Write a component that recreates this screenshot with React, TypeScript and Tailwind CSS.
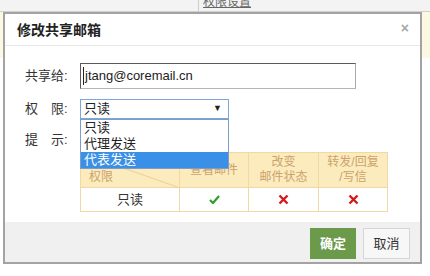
import React from "react";

const font = "font-['Liberation_Sans','Noto_Sans_CJK_SC',sans-serif]";

function Check() {
  return (
    <svg width="11" height="9" viewBox="0 0 11 9">
      <path d="M1 5 L4 8 L10 1" fill="none" stroke="#2e9e2e" strokeWidth="2.2" />
    </svg>
  );
}

function Cross() {
  return (
    <svg width="11" height="11" viewBox="0 0 11 11">
      <path d="M1.5 1.5 L9.5 9.5 M9.5 1.5 L1.5 9.5" fill="none" stroke="#d11a1a" strokeWidth="2.4" />
    </svg>
  );
}

export default function App() {
  return (
    <div className={`relative w-[430px] h-[276px] overflow-hidden bg-white ${font}`}>
      {/* background page */}
      <div className="h-[12px] bg-[#f3f3f3] border-b border-[#cfcfcf] flex">
        <div className="w-[199px] border-r border-[#cfcfcf]" />
        <div className="pl-[4px] text-[12px] leading-[12px] text-[#666] mt-[-4px] underline">权限设置</div>
      </div>
      <div className="h-[46px] bg-[#fdf8e1]" />

      {/* dialog */}
      <div className="absolute left-[3px] top-[12px] w-[419px] h-[252px] border-2 border-[#a3a3a3] bg-white flex flex-col">
        <div className="h-[32px] shrink-0 border-b border-[#e8e8e8] flex items-center justify-between pl-[12px] pr-[11px]">
          <span className="text-[14px] font-bold text-[#222] leading-none pt-[1px]">修改共享邮箱</span>
          <span className="text-[14px] font-bold text-[#a8a8a8] leading-none mt-[-4px]">×</span>
        </div>

        <div className="flex-1 pl-[20px] pt-[17px] text-[13px] text-[#333]">
          <div className="flex items-center h-[26px]">
            <span className="w-[55px]">共享给:</span>
            <div className="relative w-[276px] h-[26px] border border-t-[#5a5a5a] border-l-[#5a5a5a] border-r-[#a8a8a8] border-b-[#b5b5b5] flex items-center pl-[2px] text-[13px] text-[#222]">
              <span className="w-[1px] h-[18px] bg-[#222] mr-[1px]" />
              jtang@coremail.cn
            </div>
          </div>

          <div className="flex items-center h-[20px] mt-[10px]">
            <span className="w-[55px]">权　限:</span>
            <div className="relative w-[149px] h-[20px] border border-[#7aa7e0] flex items-center justify-between pl-[3px] pr-[6px] text-[#222]">
              <span>只读</span>
              <span className="text-[9px]">▼</span>
              <div className="absolute left-[-1px] top-[19px] w-[149px] border border-[#7f9cc7] bg-white z-10 text-[13px] text-[#222]">
                <div className="h-[16px] leading-[16px] pl-[3px]">只读</div>
                <div className="h-[16px] leading-[16px] pl-[3px]">代理发送</div>
                <div className="h-[16px] leading-[16px] pl-[3px] bg-[#3a8fe6] text-white">代表发送</div>
              </div>
            </div>
          </div>

          <div className="h-[16px] leading-[16px] mt-[13px]">提　示:</div>

          <table className="ml-[55px] mt-[4px] border-collapse table-fixed w-[307px] text-[12px]">
            <colgroup>
              <col className="w-[99px]" />
              <col className="w-[69px]" />
              <col className="w-[70px]" />
              <col className="w-[69px]" />
            </colgroup>
            <thead>
              <tr className="h-[35px] bg-[#fcebbd] text-[#caa36c] leading-[15px]">
                <th className="relative border border-[#f0d9a6] font-normal p-0">
                  <svg className="absolute inset-0" width="99" height="35" viewBox="0 0 99 35">
                    <line x1="0" y1="0" x2="99" y2="35" stroke="#e8cf9c" strokeWidth="1" />
                  </svg>
                  <div className="absolute right-[10px] top-[2px]">范围</div>
                  <div className="absolute left-[8px] bottom-[2px]">权限</div>
                </th>
                <th className="border border-[#f0d9a6] font-normal">查看邮件</th>
                <th className="border border-[#f0d9a6] font-normal">改变<br />邮件状态</th>
                <th className="border border-[#f0d9a6] font-normal">转发/回复<br />/写信</th>
              </tr>
            </thead>
            <tbody>
              <tr className="h-[24px]">
                <td className="border border-[#f0d9a6] text-center text-[13px] text-[#333]">只读</td>
                <td className="border border-[#f0d9a6]">
                  <div className="flex justify-center"><Check /></div>
                </td>
                <td className="border border-[#f0d9a6]">
                  <div className="flex justify-center"><Cross /></div>
                </td>
                <td className="border border-[#f0d9a6]">
                  <div className="flex justify-center"><Cross /></div>
                </td>
              </tr>
            </tbody>
          </table>
        </div>

        <div className="h-[40px] shrink-0 bg-[#f0f0f0] flex justify-end items-start pt-[6px] pr-[10px] gap-[7px]">
          <button className="w-[46px] h-[31px] bg-[#6a9a4a] text-white text-[13px] font-bold">确定</button>
          <button className="w-[47px] h-[31px] bg-[#f7f7f7] border border-[#d6d6d6] text-[#333] text-[13px]">取消</button>
        </div>
      </div>
    </div>
  );
}
